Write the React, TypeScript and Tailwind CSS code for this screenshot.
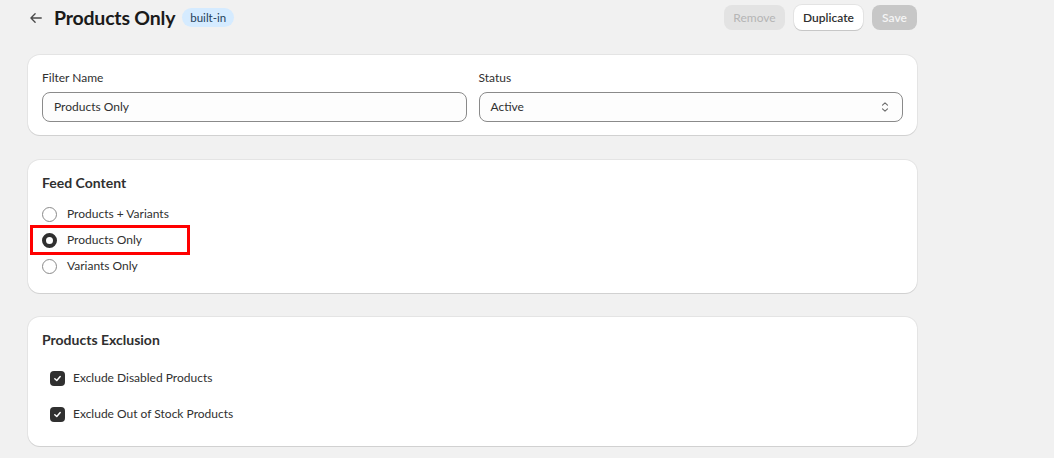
import { useState } from 'react'

function Radio({ checked, label, onSelect }: { checked: boolean; label: string; onSelect: () => void }) {
  return (
    <label className="flex items-center gap-[10px] h-[26px] cursor-pointer" onClick={onSelect}>
      <span
        className={
          checked
            ? 'w-[15px] h-[15px] rounded-full border-[4px] border-[#303030] bg-white'
            : 'w-[15px] h-[15px] rounded-full border border-[#8a8a8a] bg-white'
        }
      />
      <span className="text-[12px] text-[#303030]">{label}</span>
    </label>
  )
}

function Checkbox({ label }: { label: string }) {
  return (
    <label className="flex items-center gap-[8px] h-[20px]">
      <span className="w-[15px] h-[15px] rounded-[4px] bg-[#303030] flex items-center justify-center">
        <svg width="9" height="9" viewBox="0 0 10 10" fill="none">
          <path d="M2 5.2 L4.2 7.3 L8 2.8" stroke="white" strokeWidth="1.6" strokeLinecap="round" strokeLinejoin="round" />
        </svg>
      </span>
      <span className="text-[12px] text-[#303030]">{label}</span>
    </label>
  )
}

const card =
  'bg-white rounded-xl shadow-[0_1px_0_0_rgba(26,26,26,0.09),0_0_0_1px_rgba(0,0,0,0.05)]'

export default function App() {
  const [content, setContent] = useState('products')

  return (
    <div
      className="min-h-screen bg-[#f1f1f1] text-[#303030]"
      style={{ fontFamily: 'Lato, "Noto Sans", sans-serif' }}
    >
      <div className="ml-[28px] w-[889px] pt-[5px] flex flex-col">
        <div className="flex items-center justify-between h-[25px]">
          <div className="flex items-center">
            <svg width="14" height="14" viewBox="0 0 16 16" fill="none" className="ml-[1px]">
              <path d="M14 8H2.5M7 3.2L2.2 8L7 12.8" stroke="#4a4a4a" strokeWidth="1.5" strokeLinecap="round" strokeLinejoin="round" />
            </svg>
            <h1 className="ml-[11px] text-[19.5px] font-bold tracking-[-0.2px] text-[#1a1a1a]">Products Only</h1>
            <span className="ml-[7px] h-[19px] px-[8px] rounded-full bg-[#d5ebff] text-[11.5px] leading-[19px] text-[#23405a]">
              built-in
            </span>
          </div>
          <div className="flex items-center gap-[9px]">
            <button className="h-[25px] w-[61px] rounded-lg bg-[#e3e3e3] text-[12px] text-[#b5b5b5]">Remove</button>
            <button className="h-[25px] w-[69px] rounded-lg bg-white text-[12px] font-semibold text-[#303030] shadow-[0_1px_0_0_#c7c7c7,0_0_0_1px_#e3e3e3]">
              Duplicate
            </button>
            <button className="h-[25px] w-[45px] rounded-lg bg-[#c7c7c7] text-[12px] font-semibold text-[#f5f5f5]">Save</button>
          </div>
        </div>

        <div className={`${card} mt-[25px] px-[14px] pt-[13px] pb-[13px] grid grid-cols-2 gap-x-[12px]`}>
          <div className="flex flex-col gap-[4px]">
            <span className="text-[12px] leading-[20px]">Filter Name</span>
            <div className="h-[30px] rounded-lg border border-[#8a8a8a] bg-[#fdfdfd] px-[11px] flex items-center text-[12px]">
              Products Only
            </div>
          </div>
          <div className="flex flex-col gap-[4px]">
            <span className="text-[12px] leading-[20px]">Status</span>
            <div className="h-[30px] rounded-lg border border-[#8a8a8a] bg-[#fdfdfd] px-[11px] flex items-center justify-between text-[12px]">
              <span>Active</span>
              <svg width="12" height="14" viewBox="0 0 12 14" fill="none">
                <path d="M3.5 5.2L6 2.8L8.5 5.2M3.5 8.8L6 11.2L8.5 8.8" stroke="#6b6b6b" strokeWidth="1.1" strokeLinecap="round" strokeLinejoin="round" />
              </svg>
            </div>
          </div>
        </div>

        <div className={`${card} relative mt-[25px] px-[14px] pt-[13px] pb-[14px]`}>
          <h2 className="text-[14px] font-bold leading-[20px]">Feed Content</h2>
          <div className="mt-[8px] flex flex-col">
            <Radio label="Products + Variants" checked={content === 'both'} onSelect={() => setContent('both')} />
            <Radio label="Products Only" checked={content === 'products'} onSelect={() => setContent('products')} />
            <Radio label="Variants Only" checked={content === 'variants'} onSelect={() => setContent('variants')} />
          </div>
          <div className="absolute left-[2px] top-[65px] w-[160px] h-[30px] border-[3px] border-[#ff0000] pointer-events-none" />
        </div>

        <div className={`${card} mt-[24px] px-[14px] pt-[13px] pb-[22px]`}>
          <h2 className="text-[14px] font-bold leading-[20px]">Products Exclusion</h2>
          <div className="mt-[18px] pl-[8px] flex flex-col gap-[16px]">
            <Checkbox label="Exclude Disabled Products" />
            <Checkbox label="Exclude Out of Stock Products" />
          </div>
        </div>
      </div>
    </div>
  )
}
